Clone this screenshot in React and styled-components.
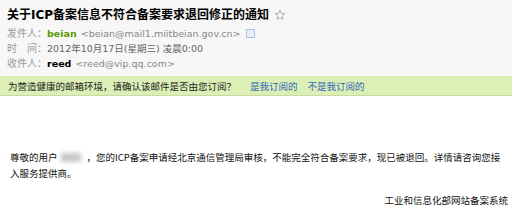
import React from "react";
import { styled, createGlobalStyle } from "styled-components";

const GlobalStyle = createGlobalStyle`
  body {
    margin: 0;
    background: #ffffff;
    font-family: "DejaVu Sans", "Noto Sans CJK SC", sans-serif;
  }
`;

const Page = styled.div`
  width: 512px;
  height: 220px;
  overflow: hidden;
  background: #ffffff;
`;

const Header = styled.div`
  background: #f7f7f7;
  padding: 7px 0 5px 7px;
`;

const Title = styled.div`
  display: flex;
  align-items: center;
  gap: 5px;
  font-family: "DejaVu Sans", "Noto Sans CJK SC", sans-serif;
  font-size: 12px;
  font-weight: bold;
  line-height: 16px;
  color: #000000;
  margin-bottom: 3px;
`;

const Star = styled.svg`
  width: 12px;
  height: 12px;
`;

const Row = styled.div`
  display: flex;
  align-items: center;
  font-size: 9.5px;
  line-height: 15px;
  color: #666666;
  white-space: nowrap;
`;

const Label = styled.span`
  color: #999999;
  width: 40px;
  font-size: 10px;
  display: flex;
  justify-content: space-between;
`;

const Sender = styled.span`
  font-weight: bold;
  color: ${(p) => p.$color || "#000000"};
  margin-right: 4px;
`;

const Addr = styled.span`
  color: #888888;
`;

const Card = styled.span`
  display: inline-block;
  width: 9px;
  height: 9px;
  margin-left: 5px;
  border: 1px solid #a9c3de;
  background: #e4eef8;
  box-sizing: border-box;
`;

const Notice = styled.div`
  display: flex;
  align-items: center;
  height: 19px;
  padding-left: 8px;
  background: #dbefb6;
  border-bottom: 1px solid #c7dba2;
  font-family: "Noto Sans CJK SC", sans-serif;
  font-size: 9.5px;
  color: #222222;
`;

const NoticeLink = styled.span`
  color: #3366bb;
  margin-left: ${(p) => p.$gap}px;
`;

const Body = styled.div`
  padding: 53px 8px 0 10px;
  font-family: "Noto Sans CJK SC", sans-serif;
  font-size: 9.5px;
  line-height: 16px;
  color: #111111;
`;

const Blur = styled.span`
  display: inline-block;
  width: 20px;
  height: 9px;
  vertical-align: -1px;
  background: #c8c8c8;
  filter: blur(2px);
  margin: 0 6px 0 3px;
`;

const Sign = styled.div`
  text-align: right;
  padding: 12px 4px 0 0;
  font-family: "Noto Sans CJK SC", sans-serif;
  font-size: 9.5px;
  color: #111111;
`;

export default function App() {
  return (
    <Page>
      <GlobalStyle />
      <Header>
        <Title>
          关于ICP备案信息不符合备案要求退回修正的通知
          <Star viewBox="0 0 24 24">
            <path
              d="M12 2.5l2.9 6.2 6.6.7-5 4.5 1.4 6.6L12 17.2l-5.9 3.3 1.4-6.6-5-4.5 6.6-.7z"
              fill="none"
              stroke="#9aa7b4"
              strokeWidth="1.8"
              strokeLinejoin="round"
            />
          </Star>
        </Title>
        <Row>
          <Label>发件人：</Label>
          <Sender $color="#5a9a00">beian</Sender>
          <Addr>&lt;beian@mail1.miitbeian.gov.cn&gt;</Addr>
          <Card />
        </Row>
        <Row>
          <Label>
            <span>时</span>
            <span>间：</span>
          </Label>
          <span>2012年10月17日(星期三) 凌晨0:00</span>
        </Row>
        <Row>
          <Label>收件人：</Label>
          <Sender>reed</Sender>
          <Addr>&lt;reed@vip.qq.com&gt;</Addr>
        </Row>
      </Header>
      <Notice>
        为营造健康的邮箱环境，请确认该邮件是否由您订阅？
        <NoticeLink $gap={14}>是我订阅的</NoticeLink>
        <NoticeLink $gap={10}>不是我订阅的</NoticeLink>
      </Notice>
      <Body>
        尊敬的用户<Blur />，您的ICP备案申请经北京通信管理局审核，不能完全符合备案要求，现已被退回。详情请咨询您接入服务提供商。
      </Body>
      <Sign>工业和信息化部网站备案系统</Sign>
    </Page>
  );
}
